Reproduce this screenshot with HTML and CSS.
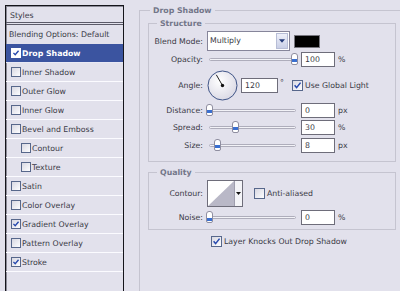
FILE: index.html
```html
<!DOCTYPE html>
<html lang="en">
<head>
  <meta charset="UTF-8" />
  <title>Layer Style</title>
  <link rel="stylesheet" href="styles.css">
</head>
<body>
  <div class="dialog">
    <div class="styles-panel">
      <div class="panel-head">Styles</div>
      <div class="panel-blend">Blending Options: Default</div>
      <div class="panel-item selected"><span class="check on"><svg viewBox="0 0 10 10"><polyline points="1.8,4.8 4,7.2 8.2,2.2"/></svg></span>Drop Shadow</div>
      <div class="panel-item"><span class="check"></span>Inner Shadow</div>
      <div class="panel-item"><span class="check"></span>Outer Glow</div>
      <div class="panel-item"><span class="check"></span>Inner Glow</div>
      <div class="panel-item"><span class="check"></span>Bevel and Emboss</div>
      <div class="panel-item sub"><span class="check"></span>Contour</div>
      <div class="panel-item sub"><span class="check"></span>Texture</div>
      <div class="panel-item"><span class="check"></span>Satin</div>
      <div class="panel-item"><span class="check"></span>Color Overlay</div>
      <div class="panel-item"><span class="check on"><svg viewBox="0 0 10 10"><polyline points="1.8,4.8 4,7.2 8.2,2.2"/></svg></span>Gradient Overlay</div>
      <div class="panel-item"><span class="check"></span>Pattern Overlay</div>
      <div class="panel-item"><span class="check on"><svg viewBox="0 0 10 10"><polyline points="1.8,4.8 4,7.2 8.2,2.2"/></svg></span>Stroke</div>
    </div>

    <div class="options">
      <div class="group-title outer-title">Drop Shadow</div>

      <div class="group structure">
        <div class="group-title">Structure</div>
        <div class="row blend-row">
          <span class="label">Blend Mode:</span>
          <div class="select"><span class="select-value">Multiply</span><span class="select-btn"><svg viewBox="0 0 7 4"><polygon points="0,0 7,0 3.5,4"/></svg></span></div>
          <span class="swatch"></span>
        </div>
        <div class="row opacity-row">
          <span class="label">Opacity:</span>
          <div class="slider"><div class="track"><span class="thumb" style="left:100%"></span></div></div>
          <span class="field">100</span><span class="unit">%</span>
        </div>
        <div class="row angle-row">
          <span class="label">Angle:</span>
          <svg class="dial" viewBox="0 0 31 31">
            <defs><radialGradient id="dialFill" cx="40%" cy="35%" r="70%"><stop offset="0" stop-color="#ffffff"/><stop offset="1" stop-color="#d9d8e4"/></radialGradient></defs>
            <circle cx="15.5" cy="15.5" r="14.5" fill="url(#dialFill)" stroke="#3f5487" stroke-width="1"/>
            <line x1="15.5" y1="15.5" x2="9.3" y2="4.8" stroke="#222" stroke-width="1"/>
            <circle cx="15.5" cy="15.5" r="1.7" fill="#111"/>
          </svg>
          <span class="field angle-field">120</span><span class="deg">°</span>
          <span class="check box on"><svg viewBox="0 0 10 10"><polyline points="1.8,4.8 4,7.4 8.4,1.8"/></svg></span><span class="check-label">Use Global Light</span>
        </div>
        <div class="row distance-row">
          <span class="label">Distance:</span>
          <div class="slider"><div class="track"><span class="thumb" style="left:0%"></span></div></div>
          <span class="field">0</span><span class="unit">px</span>
        </div>
        <div class="row spread-row">
          <span class="label">Spread:</span>
          <div class="slider"><div class="track"><span class="thumb" style="left:30%"></span></div></div>
          <span class="field">30</span><span class="unit">%</span>
        </div>
        <div class="row size-row">
          <span class="label">Size:</span>
          <div class="slider"><div class="track"><span class="thumb" style="left:9%"></span></div></div>
          <span class="field">8</span><span class="unit">px</span>
        </div>
      </div>

      <div class="group quality">
        <div class="group-title">Quality</div>
        <div class="row contour-row">
          <span class="label">Contour:</span>
          <div class="contour">
            <svg class="curve" viewBox="0 0 26 25"><rect width="26" height="25" fill="#fff"/><polygon points="0,25 26,0 26,25" fill="#b9b8c7"/></svg>
            <span class="contour-btn"><svg viewBox="0 0 5 3"><polygon points="0,0 5,0 2.5,3"/></svg></span>
          </div>
          <span class="check box aa"></span><span class="check-label">Anti-aliased</span>
        </div>
        <div class="row noise-row">
          <span class="label">Noise:</span>
          <div class="slider"><div class="track"><span class="thumb" style="left:0%"></span></div></div>
          <span class="field">0</span><span class="unit">%</span>
        </div>
      </div>

      <div class="knockout">
        <span class="check box on"><svg viewBox="0 0 10 10"><polyline points="1.8,4.8 4,7.4 8.4,1.8"/></svg></span><span class="check-label">Layer Knocks Out Drop Shadow</span>
      </div>
    </div>
  </div>
</body>
</html>
```

FILE: styles.css
```css
*{margin:0;padding:0;box-sizing:border-box}
body{font-family:"DejaVu Sans",Verdana,sans-serif;font-size:7.8px;color:#3a3a46;background:#e2e1ec;width:400px;height:291px;overflow:hidden}
.dialog{display:flex;align-items:flex-start;padding:5px 0 0 5px;height:291px}

/* left list */
.styles-panel{flex:none;width:119px;height:286px;border:1px solid #15151b;border-bottom:none;box-shadow:inset 1px 1px 0 #8c8b98;overflow:hidden}
.panel-head{height:19px;line-height:19px;padding-left:4px;border-bottom:3px double #5b5a68}
.panel-blend{height:19px;line-height:19px;padding-left:3px}
.panel-item{display:flex;align-items:center;height:19px;padding-left:5px;border-bottom:1px solid #fbfbff;white-space:nowrap}
.panel-item.sub{padding-left:15px}
.panel-item.selected{background:#3b54a0;color:#fff;font-weight:bold;border-bottom-color:#e8e8f4}
.check{flex:none;display:inline-flex;width:10px;height:10px;margin-right:1px;border:1px solid #57678b;background:linear-gradient(135deg,#d8d8e2,#fdfdff)}
.check svg{width:100%;height:100%;fill:none;stroke:#2547ad;stroke-width:1.7}
.selected .check{border-color:#fff;background:#fff}

/* right side */
.options{flex:1;height:281px;margin:5px 0 0 15px;padding-left:8px;border-left:1px solid #c5c4d0;border-top:1px solid #c5c4d0}
.group-title{width:fit-content;height:11px;line-height:11px;margin:-6px 0 0 8px;padding:0 3px;background:#e2e1ec;color:#737689;font-weight:bold}
.outer-title{margin-left:2px}
.group{width:248px;border:1px solid #c5c4d0}
.structure{height:139px;margin-top:7px}
.quality{height:58px;margin-top:10px}

.row{display:flex;align-items:center;white-space:nowrap}
.label{width:54px;margin-right:4px;text-align:right}
.blend-row{height:20px;margin-top:2px}
.opacity-row{height:15px;margin-top:1px}
.angle-row{height:31px;margin-top:3px}
.distance-row{height:15px;margin-top:2px}
.spread-row{height:15px;margin-top:2px}
.size-row{height:15px;margin-top:3px}
.contour-row{height:27px;margin-top:2px}
.noise-row{height:15px;margin-top:3px}

.select{display:flex;width:83px;height:20px;border:1px solid #86859a;background:#fff}
.select-value{flex:1;line-height:18px;padding-left:2px}
.select-btn{display:flex;align-items:center;justify-content:center;width:12px;margin:1px;background:linear-gradient(#eef0fa,#c9cfe6);border:1px solid #b7bdd6}
.select-btn svg{width:6px;height:4px;fill:#233a78}
.swatch{width:26px;height:13px;margin-left:4px;background:#000;border:1px solid #77767f}

.slider{width:94px;height:15px;padding:6px 5px 0 2px}
.track{position:relative;height:3px;border:1px solid #aeadbb;border-radius:2px;background:#f2f2f7}
.thumb{position:absolute;top:-6px;width:7px;height:12px;margin-left:-4px;border:1px solid #8f8ea0;border-radius:3px 3px 2px 2px;background:linear-gradient(#fff 55%,#3a6fd0 55%,#3a6fd0 85%,#fff 85%)}

.field{width:34px;height:15px;line-height:13px;padding-left:3px;border:1px solid #6e6d7a;background:#fff}
.unit{margin-left:3px}
.dial{width:31px;height:31px}
.angle-field{width:37px;margin-left:3px}
.deg{width:14px;padding-left:2px;align-self:flex-start;margin-top:8px}
.check.box{width:11px;height:11px}
.check-label{margin-left:1px}

.contour{display:flex;width:36px;height:27px;border:1px solid #6e6d7a;background:#fff}
.curve{width:26px;height:25px}
.contour-btn{display:flex;align-items:center;justify-content:center;flex:1;border-left:1px solid #9f9eae;background:#f4f4f8}
.contour-btn svg{width:5px;height:3px;fill:#111}
.aa{margin-left:11px}

.knockout{display:flex;align-items:center;height:12px;margin:5px 0 0 63px;white-space:nowrap}
```
